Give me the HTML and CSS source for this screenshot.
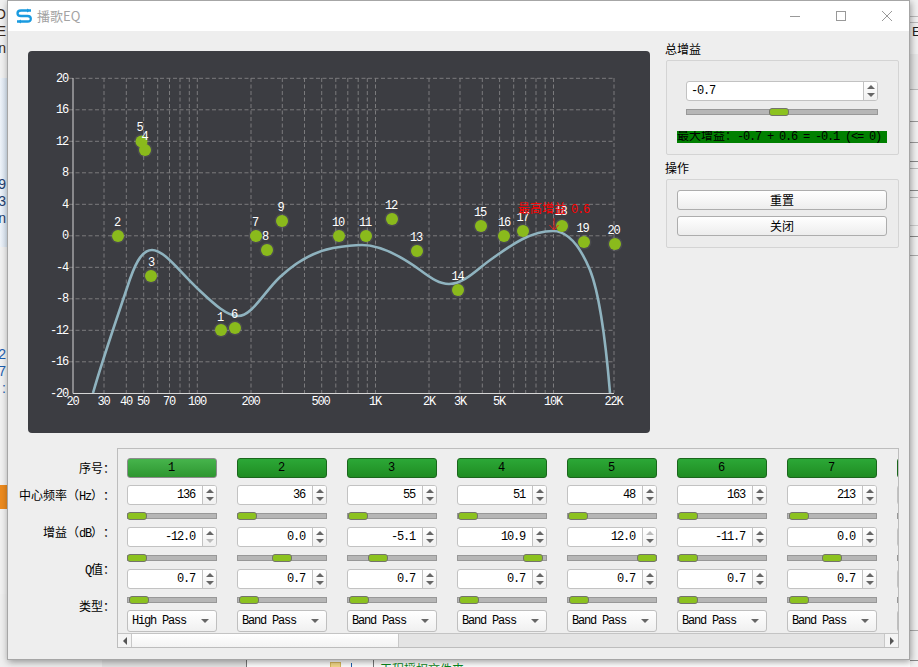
FILE: index.html
```html
<!DOCTYPE html>
<html lang="zh-CN">
<head>
<meta charset="utf-8">
<title>播歌EQ</title>
<link rel="stylesheet" href="styles.css">
</head>
<body>
<div class="desktop">
  <div class="left-strip">
    <div class="ls-text ls-a"><span>O</span><span>E</span><span>n</span></div>
    <div class="ls-blue"><div class="ls-text ls-b"><span>9</span><span>3</span><span>n</span></div></div>
    <div class="ls-text ls-c"><span>2</span><span>7</span><span>:</span></div>
    <div class="ls-orange"></div>
  </div>
  <div class="right-strip"><span class="rs-letter">E</span></div>
  <div class="bottom-strip">
    <div class="bs-a"></div>
    <div class="bs-b"></div>
    <div class="bs-c"><div class="folder"></div><div class="bs-mark"></div></div>
    <div class="bs-d">工程授权文件夹</div>
  </div>

  <div class="window">
    <div class="titlebar">
      <svg class="logo" width="16" height="16" viewBox="0 0 16 16">
        <path d="M15 2.5H5Q1.5 2.5 1.5 5.2T5 8H11.500Q14.800 8 14.800 10.800T11.500 13.500H1" fill="none" stroke="#1a9be0" stroke-width="2.3"/>
        <path d="M11 0.500V4.500L14 2.500ZM5 11.500V15.500L2 13.500Z" fill="#1a9be0"/>
      </svg>
      <span class="title">播歌EQ</span>
      <div class="win-controls">
        <svg width="10" height="10" viewBox="0 0 10 10"><path d="M0 5.500H10" stroke="#999" fill="none"/></svg>
        <svg width="10" height="10" viewBox="0 0 10 10"><rect x="0.500" y="0.500" width="9" height="9" stroke="#999" fill="none"/></svg>
        <svg width="10" height="10" viewBox="0 0 10 10"><path d="M0 0L10 10M10 0L0 10" stroke="#999" fill="none"/></svg>
      </div>
    </div>

    <div class="top-row">
      <div class="chart">
        <svg class="plot" width="622" height="382" viewBox="28 51 622 382">
          <g class="grid">
            <path d="M69 78.300H614M69 109.800H614M69 141.300H614M69 172.800H614M69 204.300H614M69 235.800H614M69 267.300H614M69 298.800H614M69 330.300H614M69 361.800H614"/>
            <path d="M104 78V393M126.300 78V393M143.700 78V393M157.700 78V393M169.500 78V393M180 78V393M189.300 78V393M197.300 78V393M251 78V393M282.300 78V393M304.500 78V393M321.700 78V393M335.800 78V393M347.800 78V393M358.200 78V393M367.300 78V393M375.500 78V393M429 78V393M460 78V393M482.300 78V393M499.600 78V393M513.700 78V393M525.700 78V393M536 78V393M545.200 78V393M553.500 78V393M614 78V393"/>
          </g>
          <path class="axis" d="M73 78V393.500H614"/>
          <g class="ylab">
            <text x="68" y="82">20</text><text x="68" y="113">16</text><text x="68" y="145">12</text><text x="68" y="176">8</text><text x="68" y="208">4</text><text x="68" y="239">0</text><text x="68" y="271">-4</text><text x="68" y="302">-8</text><text x="68" y="334">-12</text><text x="68" y="365">-16</text><text x="68" y="397">-20</text>
          </g>
          <g class="xlab">
            <text x="72.500" y="405">20</text><text x="103.500" y="405">30</text><text x="126" y="405">40</text><text x="143" y="405">50</text><text x="169" y="405">70</text><text x="197" y="405">100</text><text x="250.500" y="405">200</text><text x="320.500" y="405">500</text><text x="375" y="405">1K</text><text x="429" y="405">2K</text><text x="460" y="405">3K</text><text x="499" y="405">5K</text><text x="553" y="405">10K</text><text x="613.500" y="405">22K</text>
          </g>
          <path class="curve" d="M93 393C103 358 118 315 127 288C134 266 141 250 152 250C164 250 178 270 198 289C212 302 226 316 238 316C252 316 264 292 280 277C296 262 312 252 333 248C345 246 352 245 362 245C378 245 398 254 420 270C432 279 440 284 449 284C465 284 478 268 493 258C510 246 530 231 553 231C568 231 580 246 590 270C600 295 606 345 610 393"/>
          <g class="halos">
            <circle cx="221" cy="330" r="7.500"/><circle cx="118" cy="236" r="7.500"/><circle cx="151" cy="276" r="7.500"/><circle cx="145" cy="150" r="7.500"/><circle cx="141.500" cy="141.500" r="7.500"/><circle cx="235" cy="328" r="7.500"/><circle cx="256" cy="236" r="7.500"/><circle cx="267" cy="250" r="7.500"/><circle cx="282" cy="221" r="7.500"/><circle cx="339" cy="236" r="7.500"/><circle cx="366" cy="236" r="7.500"/><circle cx="392" cy="219" r="7.500"/><circle cx="417" cy="251" r="7.500"/><circle cx="458" cy="290" r="7.500"/><circle cx="481" cy="226" r="7.500"/><circle cx="504" cy="236" r="7.500"/><circle cx="523" cy="231" r="7.500"/><circle cx="562" cy="226" r="7.500"/><circle cx="584" cy="242" r="7.500"/><circle cx="615" cy="244" r="7.500"/>
          </g>
          <g class="points">
            <circle cx="221" cy="330" r="6"/><circle cx="118" cy="236" r="6"/><circle cx="151" cy="276" r="6"/><circle cx="145" cy="150" r="6"/><circle cx="141.500" cy="141.500" r="6"/><circle cx="235" cy="328" r="6"/><circle cx="256" cy="236" r="6"/><circle cx="267" cy="250" r="6"/><circle cx="282" cy="221" r="6"/><circle cx="339" cy="236" r="6"/><circle cx="366" cy="236" r="6"/><circle cx="392" cy="219" r="6"/><circle cx="417" cy="251" r="6"/><circle cx="458" cy="290" r="6"/><circle cx="481" cy="226" r="6"/><circle cx="504" cy="236" r="6"/><circle cx="523" cy="231" r="6"/><circle cx="562" cy="226" r="6"/><circle cx="584" cy="242" r="6"/><circle cx="615" cy="244" r="6"/>
          </g>
          <g class="plab">
            <text x="220" y="321">1</text><text x="117" y="226">2</text><text x="151" y="266">3</text><text x="144.500" y="140">4</text><text x="139.500" y="131">5</text><text x="234" y="318">6</text><text x="255" y="226">7</text><text x="265" y="240">8</text><text x="280.500" y="211">9</text><text x="338" y="226">10</text><text x="365" y="226">11</text><text x="391" y="209">12</text><text x="416" y="241">13</text><text x="457.500" y="280">14</text><text x="480" y="216">15</text><text x="504" y="226">16</text><text x="522.500" y="221">17</text><text x="560.500" y="215">18</text><text x="582.500" y="232">19</text><text x="613.500" y="234">20</text>
          </g>
          <text class="peak" x="518" y="213">最高增益<tspan class="peak-num" x="571">0.6</tspan></text>
          <path class="peak-arrow" d="M554 218V230M549.500 225L554 230L558.500 225"/>
        </svg>
      </div>

      <div class="side">
        <div class="side-label">总增益</div>
        <div class="group">
          <div class="gain-inner">
            <div class="spin spin-left m">
              <span class="spin-val">-0.7</span>
              <span class="spin-btn"><i class="up"></i><i class="down"></i></span>
            </div>
            <div class="slider"><span class="handle" style="left:83px"></span></div>
          </div>
          <div class="max-gain">最大增益：<span class="m">-0.7 + 0.6 = -0.1 (&lt;= 0)</span></div>
        </div>
        <div class="side-label side-label-2">操作</div>
        <div class="group group-actions">
          <button class="btn">重置</button>
          <button class="btn">关闭</button>
        </div>
      </div>
    </div>

    <div class="bottom-row">
      <div class="labels">
        <div class="lbl">序号：</div>
        <div class="lbl lbl-near">中心频率（<span class="m">Hz</span>）：</div>
        <div class="lbl">增益（<span class="m">dB</span>）：</div>
        <div class="lbl"><span class="m">Q</span>值：</div>
        <div class="lbl">类型：</div>
      </div>
      <div class="scroll-area">
        <div class="viewport">
          <div class="col">
            <button class="band band-on m">1</button>
            <div class="spin m"><span class="spin-val">136</span><span class="spin-btn"><i class="up"></i><i class="down"></i></span></div>
            <div class="slider"><span class="handle" style="left:0"></span></div>
            <div class="spin m"><span class="spin-val">-12.0</span><span class="spin-btn"><i class="up"></i><i class="down off"></i></span></div>
            <div class="slider"><span class="handle" style="left:0"></span></div>
            <div class="spin m"><span class="spin-val">0.7</span><span class="spin-btn"><i class="up"></i><i class="down"></i></span></div>
            <div class="slider"><span class="handle" style="left:2px"></span></div>
            <div class="combo m"><span>High Pass</span><i class="down"></i></div>
          </div>
          <div class="col">
            <button class="band m">2</button>
            <div class="spin m"><span class="spin-val">36</span><span class="spin-btn"><i class="up"></i><i class="down"></i></span></div>
            <div class="slider"><span class="handle" style="left:0"></span></div>
            <div class="spin m"><span class="spin-val">0.0</span><span class="spin-btn"><i class="up"></i><i class="down"></i></span></div>
            <div class="slider"><span class="handle" style="left:35px"></span></div>
            <div class="spin m"><span class="spin-val">0.7</span><span class="spin-btn"><i class="up"></i><i class="down"></i></span></div>
            <div class="slider"><span class="handle" style="left:2px"></span></div>
            <div class="combo m"><span>Band Pass</span><i class="down"></i></div>
          </div>
          <div class="col">
            <button class="band m">3</button>
            <div class="spin m"><span class="spin-val">55</span><span class="spin-btn"><i class="up"></i><i class="down"></i></span></div>
            <div class="slider"><span class="handle" style="left:1px"></span></div>
            <div class="spin m"><span class="spin-val">-5.1</span><span class="spin-btn"><i class="up"></i><i class="down"></i></span></div>
            <div class="slider"><span class="handle" style="left:21px"></span></div>
            <div class="spin m"><span class="spin-val">0.7</span><span class="spin-btn"><i class="up"></i><i class="down"></i></span></div>
            <div class="slider"><span class="handle" style="left:2px"></span></div>
            <div class="combo m"><span>Band Pass</span><i class="down"></i></div>
          </div>
          <div class="col">
            <button class="band m">4</button>
            <div class="spin m"><span class="spin-val">51</span><span class="spin-btn"><i class="up"></i><i class="down"></i></span></div>
            <div class="slider"><span class="handle" style="left:1px"></span></div>
            <div class="spin m"><span class="spin-val">10.9</span><span class="spin-btn"><i class="up"></i><i class="down"></i></span></div>
            <div class="slider"><span class="handle" style="left:66px"></span></div>
            <div class="spin m"><span class="spin-val">0.7</span><span class="spin-btn"><i class="up"></i><i class="down"></i></span></div>
            <div class="slider"><span class="handle" style="left:2px"></span></div>
            <div class="combo m"><span>Band Pass</span><i class="down"></i></div>
          </div>
          <div class="col">
            <button class="band m">5</button>
            <div class="spin m"><span class="spin-val">48</span><span class="spin-btn"><i class="up"></i><i class="down"></i></span></div>
            <div class="slider"><span class="handle" style="left:1px"></span></div>
            <div class="spin m"><span class="spin-val">12.0</span><span class="spin-btn"><i class="up off"></i><i class="down"></i></span></div>
            <div class="slider"><span class="handle" style="left:70px"></span></div>
            <div class="spin m"><span class="spin-val">0.7</span><span class="spin-btn"><i class="up"></i><i class="down"></i></span></div>
            <div class="slider"><span class="handle" style="left:2px"></span></div>
            <div class="combo m"><span>Band Pass</span><i class="down"></i></div>
          </div>
          <div class="col">
            <button class="band m">6</button>
            <div class="spin m"><span class="spin-val">163</span><span class="spin-btn"><i class="up"></i><i class="down"></i></span></div>
            <div class="slider"><span class="handle" style="left:1px"></span></div>
            <div class="spin m"><span class="spin-val">-11.7</span><span class="spin-btn"><i class="up"></i><i class="down"></i></span></div>
            <div class="slider"><span class="handle" style="left:1px"></span></div>
            <div class="spin m"><span class="spin-val">0.7</span><span class="spin-btn"><i class="up"></i><i class="down"></i></span></div>
            <div class="slider"><span class="handle" style="left:1px"></span></div>
            <div class="combo m"><span>Band Pass</span><i class="down"></i></div>
          </div>
          <div class="col">
            <button class="band m">7</button>
            <div class="spin m"><span class="spin-val">213</span><span class="spin-btn"><i class="up"></i><i class="down"></i></span></div>
            <div class="slider"><span class="handle" style="left:2px"></span></div>
            <div class="spin m"><span class="spin-val">0.0</span><span class="spin-btn"><i class="up"></i><i class="down"></i></span></div>
            <div class="slider"><span class="handle" style="left:35px"></span></div>
            <div class="spin m"><span class="spin-val">0.7</span><span class="spin-btn"><i class="up"></i><i class="down"></i></span></div>
            <div class="slider"><span class="handle" style="left:2px"></span></div>
            <div class="combo m"><span>Band Pass</span><i class="down"></i></div>
          </div>
          <div class="col">
            <button class="band m"></button>
            <div class="spin m"></div>
            <div class="slider"></div>
            <div class="spin m"></div>
            <div class="slider"></div>
            <div class="spin m"></div>
            <div class="slider"></div>
            <div class="combo m"></div>
          </div>
        </div>
        <div class="scrollbar">
          <div class="sb-btn"><i class="left"></i></div>
          <div class="sb-thumb"></div>
          <div class="sb-track"></div>
          <div class="sb-btn sb-btn-r"><i class="right"></i></div>
        </div>
      </div>
    </div>
  </div>
</div>
</body>
</html>
```

FILE: styles.css
```css
* { box-sizing: border-box; }
html, body { margin: 0; padding: 0; }
body { width: 918px; height: 667px; overflow: hidden; }

.desktop {
  position: relative;
  width: 918px;
  height: 667px;
  overflow: hidden;
  background: #ffffff;
  font: 12px/16px "Liberation Mono", "Noto Sans CJK SC", monospace;
  color: #000;
  text-spacing-trim: space-all;
}

.m { letter-spacing: -1.2px; }

/* desktop behind the window */
.left-strip {
  position: absolute;
  left: 0;
  top: 0;
  width: 7px;
  height: 594px;
  background: #f1f1f1;
  overflow: hidden;
}
.ls-text {
  display: flex;
  flex-direction: column;
  align-items: flex-end;
  font: 14px/17px "Liberation Sans", sans-serif;
  width: 6px;
}
.ls-text span { display: block; white-space: nowrap; }
.ls-a { height: 78px; padding-top: 6px; color: #3a2a20; }
.ls-blue { height: 169px; background: linear-gradient(90deg, #eef3f9, #d9e5f2); padding-top: 98px; color: #1f3f6f; }
.ls-c { margin-top: 99px; color: #1d5fb0; }
.ls-orange { margin-top: 88px; height: 24px; background: #ec8a1e; }

.right-strip {
  position: absolute;
  left: 910px;
  top: 0;
  width: 8px;
  height: 667px;
  background-color: #f2f2f2;
  background-image:
    linear-gradient(#bbb, #bbb), linear-gradient(#bbb, #bbb), linear-gradient(#e8e8e8, #e8e8e8),
    linear-gradient(#bbb, #bbb), linear-gradient(#999, #999), linear-gradient(#999, #999),
    linear-gradient(#888, #888), linear-gradient(#bbb, #bbb), linear-gradient(#888, #888),
    linear-gradient(#bbb, #bbb), linear-gradient(#ccc, #ccc), linear-gradient(#888, #888),
    linear-gradient(#aaa, #aaa), linear-gradient(#aaa, #aaa), linear-gradient(#888, #888);
  background-repeat: no-repeat;
  background-size: 100% 1px, 100% 1px, 100% 35px, 100% 1px, 100% 1px, 100% 1px, 100% 1px, 100% 1px, 100% 1px, 100% 1px, 100% 1px, 100% 1px, 100% 1px, 100% 1px, 100% 1px;
  background-position: 0 16px, 0 22px, 0 54px, 0 89px, 0 121px, 0 142px, 0 161px, 0 168px, 0 190px, 0 197px, 0 225px, 0 236px, 0 255px, 0 630px, 0 660px;
}
.rs-letter {
  display: block;
  margin: 25px 0 0 2px;
  font: 13px/14px "Liberation Sans", sans-serif;
  color: #222;
}

.bottom-strip {
  position: absolute;
  left: 0;
  top: 594px;
  width: 910px;
  height: 73px;
  display: flex;
  background: #e8e8e8;
}
.bs-a { width: 102px; background: #efefef; }
.bs-b { width: 144px; background: #e4e4e4; }
.bs-c {
  width: 128px;
  display: flex;
  align-items: flex-end;
  padding-left: 83px;
  gap: 10px;
  background: #fff;
  border-left: 1px solid #777;
  border-right: 1px solid #777;
}
.folder { width: 11px; height: 5px; background: #f4d98a; border: 1px solid #d9b85c; border-bottom: 0; }
.bs-mark { width: 1px; height: 4px; background: #1d5fb0; }
.bs-d {
  flex: 1;
  background: #fff;
  color: #0a8a20;
  padding: 67px 0 0 6px;
  font: 12px/16px "Noto Sans CJK SC", sans-serif;
  white-space: nowrap;
  overflow: hidden;
}

/* window */
.window {
  position: absolute;
  left: 7px;
  top: 0;
  width: 903px;
  height: 660px;
  background: #eeeeee;
  border: 1px solid #a6a6a6;
  box-shadow: 1px 2px 7px rgba(0, 0, 0, 0.38);
}

.titlebar {
  height: 30px;
  background: #fff;
  display: flex;
  align-items: center;
  padding-left: 8px;
}
.logo { margin-top: -1px; flex: none; }
.title {
  margin-left: 5px;
  font: 13px/16px "Noto Sans CJK SC", "Liberation Sans", sans-serif;
  color: #a3a3a3;
}
.win-controls {
  margin-left: auto;
  display: flex;
  gap: 36px;
  padding-right: 17px;
}
.win-controls svg { display: block; }

.top-row { display: flex; align-items: flex-start; padding-left: 20px; }

.chart {
  width: 622px;
  height: 382px;
  margin-top: 20px;
  background: #3c3d42;
  border-radius: 4px;
  flex: none;
}
.plot { display: block; }
.plot text { font: 12px "Liberation Mono", "Noto Sans CJK SC", monospace; letter-spacing: -1.2px; fill: #fff; }
.grid path { fill: none; stroke: #7b7b7d; stroke-width: 1; stroke-dasharray: 4 2.5; }
.axis { fill: none; stroke: #d6d6d6; stroke-width: 1; }
.ylab text { text-anchor: end; }
.xlab text, .plab text { text-anchor: middle; }
.curve { fill: none; stroke: #8fb3bf; stroke-width: 2.6; }
.halos circle { fill: #ffffff; fill-opacity: 0.07; }
.points circle { fill: #8aba1c; }
.plot .peak { fill: #ff0000; letter-spacing: 0; }
.plot .peak-num { letter-spacing: -1.2px; }
.peak-arrow { fill: none; stroke: #e8201a; stroke-width: 1; }

.side { width: 234px; margin-left: 15px; flex: none; }
.side-label { height: 20px; margin-top: 9px; line-height: 22px; font-size: 12px; }
.side-label-2 { height: 24px; margin-top: 0; line-height: 31px; }
.group {
  margin-left: 1px;
  width: 233px;
  background: #ececec;
  border: 1px solid #d4d4d4;
  border-radius: 2px;
  padding: 0 10px;
}
.gain-inner { padding: 20px 0 0 9px; width: 201px; }
.gain-inner .spin { width: 192px; }
.gain-inner .slider { width: 192px; }
.max-gain {
  margin-top: 16px;
  margin-bottom: 11px;
  height: 12px;
  line-height: 12px;
  width: 210px;
  background: #008000;
  color: #000;
  white-space: nowrap;
  overflow: hidden;
}
.group-actions {
  display: flex;
  flex-direction: column;
  gap: 6px;
  padding-top: 10px;
  padding-bottom: 11px;
}
.btn {
  display: block;
  width: 210px;
  height: 20px;
  padding: 0;
  font: 12px/16px "Noto Sans CJK SC", sans-serif;
  color: #000;
  background: linear-gradient(#ffffff, #ededed);
  border: 1px solid #adadad;
  border-radius: 3px;
}

/* controls */
.spin {
  display: flex;
  height: 20px;
  width: 90px;
  background: #fff;
  border: 1px solid #c2c2c2;
  border-radius: 3px;
  overflow: hidden;
}
.spin-val {
  flex: 1;
  text-align: right;
  padding-right: 7px;
  line-height: 18px;
  font-size: 12px;
}
.spin-left .spin-val { text-align: left; padding-left: 4px; }
.spin-btn {
  width: 14px;
  flex: none;
  display: flex;
  flex-direction: column;
  align-items: center;
  justify-content: center;
  gap: 4px;
  border-left: 1px solid #c2c2c2;
  background: linear-gradient(#ffffff, #f0f0f0);
}
i.up, i.down, i.left, i.right { display: block; width: 0; height: 0; border-style: solid; border-color: transparent; }
i.up { border-width: 0 4px 4px; border-bottom-color: #666; }
i.down { border-width: 4px 4px 0; border-top-color: #666; }
i.left { border-width: 4px 4px 4px 0; border-right-color: #555; }
i.right { border-width: 4px 0 4px 4px; border-left-color: #555; }
i.up.off { border-bottom-color: #bbb; }
i.down.off { border-top-color: #bbb; }

.slider {
  position: relative;
  height: 6px;
  margin-top: 8px;
  background: #b6b6b6;
  border: 1px solid #989898;
}
.handle {
  position: absolute;
  top: -2px;
  margin-left: -1px;
  width: 20px;
  height: 8px;
  background: #8cc21f;
  border: 1px solid #74746c;
  border-radius: 3px;
}

.bottom-row { display: flex; margin-top: 15px; }
.labels { width: 107px; flex: none; padding-top: 10px; }
.lbl { height: 20px; line-height: 24px; text-align: right; margin-top: 17px; white-space: nowrap; }
.lbl:first-child { margin-top: 0; }
.lbl-near { margin-top: 7px; }

.scroll-area {
  margin-left: 2px;
  width: 782px;
  height: 200px;
  border: 1px solid #bdbdbd;
  background: #eeeeee;
  display: flex;
  flex-direction: column;
}
.viewport {
  height: 184px;
  padding: 9px 0 0 9px;
  display: flex;
  gap: 20px;
  overflow: hidden;
}
.col { width: 90px; flex: none; }
.band {
  display: block;
  width: 90px;
  height: 20px;
  padding: 0 2px 0 0;
  margin-bottom: 7px;
  font: 12px/16px "Liberation Mono", monospace;
  letter-spacing: -1.2px;
  color: #000;
  background: linear-gradient(#2ca837, #1f8c22);
  border: 1px solid #1a661c;
  border-radius: 3px;
}
.band-on {
  background: linear-gradient(#46b44c, #2e9630);
  border-color: #8c8c8c;
}
.col .slider + .spin { margin-top: 8px; }
.col .slider + .combo { margin-top: 7px; height: 22px; }
.combo {
  display: flex;
  align-items: center;
  justify-content: space-between;
  width: 90px;
  height: 22px;
  padding: 0 7px 0 4px;
  background: linear-gradient(#ffffff, #f0f0f0);
  border: 1px solid #bfbfbf;
  border-radius: 3px;
  font-size: 12px;
}
.scrollbar {
  height: 14px;
  display: flex;
  border-top: 1px solid #c4c4c4;
  background: #e4e4e4;
}
.sb-btn {
  width: 14px;
  flex: none;
  display: flex;
  align-items: center;
  justify-content: center;
  background: #f4f4f4;
  border-right: 1px solid #c8c8c8;
}
.sb-btn-r { border-right: 0; border-left: 1px solid #c8c8c8; }
.sb-thumb {
  width: 267px;
  flex: none;
  background: linear-gradient(#ffffff, #f3f3f3);
  border-right: 1px solid #c8c8c8;
}
.sb-track { flex: 1; }
```
